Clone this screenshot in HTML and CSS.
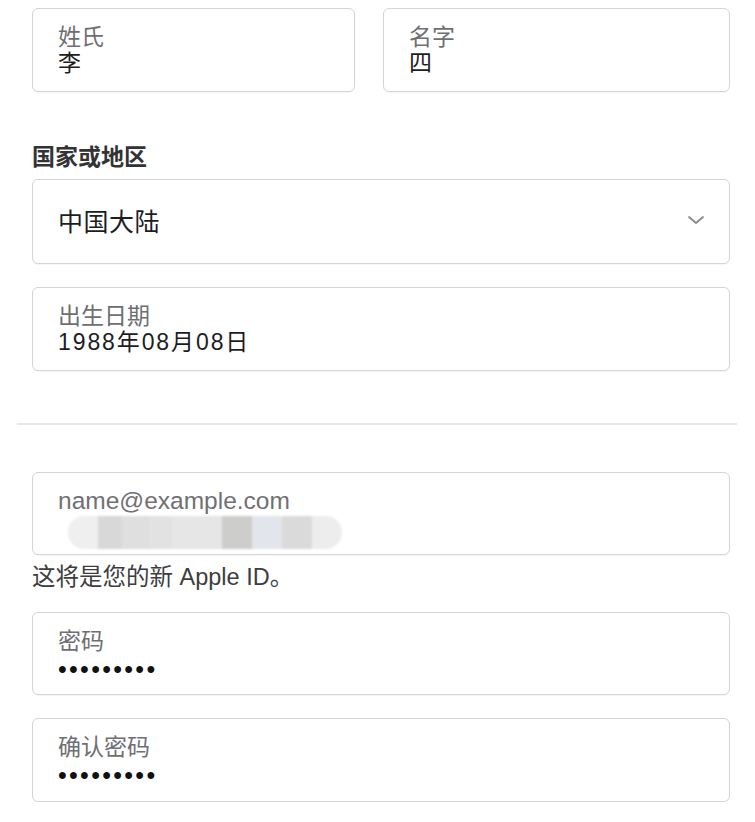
FILE: index.html
```html
<!DOCTYPE html>
<html lang="zh-CN">
<head>
<meta charset="utf-8">
<title>创建 Apple ID</title>
<link rel="stylesheet" href="styles.css">
</head>
<body>
<div class="page">
  <div class="name-row">
    <div class="field">
      <div class="field-label">姓氏</div>
      <div class="field-value">李</div>
    </div>
    <div class="field">
      <div class="field-label">名字</div>
      <div class="field-value">四</div>
    </div>
  </div>

  <div class="section-label">国家或地区</div>
  <div class="select">
    <span class="select-value">中国大陆</span>
    <svg class="chevron" width="18" height="10" viewBox="0 0 18 10" aria-hidden="true">
      <path d="M2 2 L9 8 L16 2" fill="none" stroke="#8a8a8e" stroke-width="1.8" stroke-linecap="round" stroke-linejoin="round"/>
    </svg>
  </div>

  <div class="field field-gap">
    <div class="field-label">出生日期</div>
    <div class="field-value date">1988年08月08日</div>
  </div>

  <div class="divider"></div>

  <div class="field email">
    <div class="field-label email-label">name@example.com</div>
    <div class="redacted">
      <span class="smear smear-left"></span>
      <span class="blk b1"></span>
      <span class="blk b2"></span>
      <span class="blk b3"></span>
      <span class="blk b4"></span>
      <span class="blk b5"></span>
      <span class="blk b6"></span>
      <span class="blk b7"></span>
      <span class="smear smear-right"></span>
    </div>
  </div>
  <div class="helper">这将是您的新 Apple ID。</div>

  <div class="field pw">
    <div class="field-label">密码</div>
    <div class="field-value dots">•••••••••</div>
  </div>

  <div class="field field-gap">
    <div class="field-label">确认密码</div>
    <div class="field-value dots">•••••••••</div>
  </div>
</div>
</body>
</html>
```

FILE: styles.css
```css
* { box-sizing: border-box; }

html, body {
  margin: 0;
  padding: 0;
  background: #ffffff;
}

body {
  font-family: "Liberation Sans", "Noto Sans CJK SC", sans-serif;
  color: #1d1d1f;
}

.page {
  width: 698px;
  margin-left: 32px;
  padding-top: 8px;
}

.name-row {
  display: grid;
  grid-template-columns: 323px 347px;
  column-gap: 28px;
}

.field {
  height: 84px;
  border: 1px solid #d4d4d8;
  border-radius: 6px;
  padding: 15px 20px 0 25px;
  box-shadow: 0 1px 1px rgba(0, 0, 0, 0.04);
}

.field-gap {
  margin-top: 23px;
}

.field-label {
  font-size: 23px;
  line-height: 26px;
  color: #6e6e73;
}

.field-value {
  font-size: 23px;
  line-height: 26px;
  color: #1d1d1f;
}

.date {
  letter-spacing: 1.9px;
}

.section-label {
  margin-top: 52px;
  font-size: 23px;
  line-height: 27px;
  font-weight: 600;
  color: #333336;
}

.select {
  margin-top: 8px;
  height: 85px;
  border: 1px solid #d4d4d8;
  border-radius: 6px;
  padding: 0 24px 0 25px;
  display: flex;
  align-items: center;
  justify-content: space-between;
  box-shadow: 0 1px 1px rgba(0, 0, 0, 0.04);
}

.select-value {
  font-size: 25px;
  line-height: 30px;
  color: #1d1d1f;
  font-weight: 400;
  letter-spacing: 0.5px;
}

.chevron {
  display: block;
  margin-top: -4px;
}

.divider {
  margin: 52px -7px 0 -15px;
  height: 2px;
  background: #e8e8ea;
}

.email {
  margin-top: 47px;
  height: 83px;
  padding-top: 14px;
}

.email-label {
  font-size: 24.5px;
  line-height: 27px;
  color: #707075;
}

.redacted {
  display: flex;
  align-items: stretch;
  height: 33px;
  margin-left: 10px;
  margin-top: 2px;
  filter: blur(1.2px);
}

.blk { display: block; }
.b1 { width: 24px; background: #d8d8d8; }
.b2 { width: 27px; background: #dfdfdf; }
.b3 { width: 23px; background: #e2e2e2; }
.b4 { width: 50px; background: #e6e6e6; }
.b5 { width: 30px; background: #cdcdcb; }
.b6 { width: 30px; background: #e3e5ec; }
.b7 { width: 30px; background: #dadada; }

.smear {
  display: block;
  background: #ececec;
}
.smear-left {
  width: 30px;
  border-radius: 16px 0 0 16px;
  background: #efefef;
}
.smear-right {
  width: 30px;
  border-radius: 0 18px 18px 0;
  background: #ededed;
}

.helper {
  margin-top: 8px;
  font-size: 23.5px;
  line-height: 28px;
  color: #3d3d40;
}

.pw {
  margin-top: 21px;
  height: 83px;
}

.dots {
  font-size: 25px;
  letter-spacing: 2.3px;
  color: #111;
  line-height: 26px;
  padding-top: 2px;
}
```
